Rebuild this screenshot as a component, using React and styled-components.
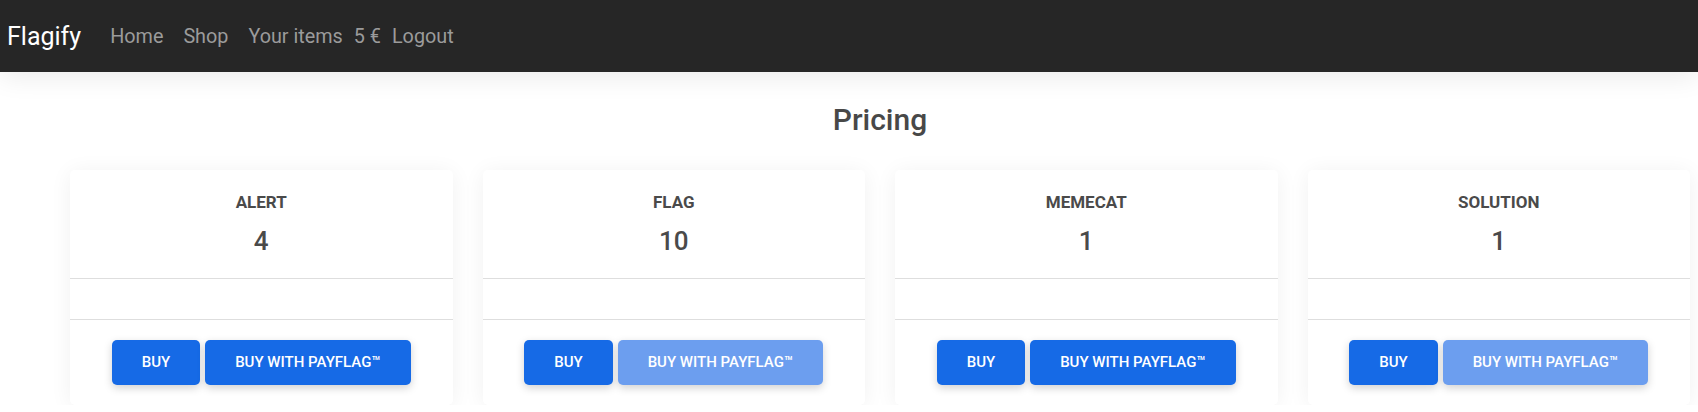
import React from "react";
import styled, { createGlobalStyle } from "styled-components";

const Global = createGlobalStyle`
  html, body { margin: 0; padding: 0; background: #ffffff; }
  body { font-family: Roboto, "Liberation Sans", Arial, sans-serif; overflow: hidden; }
`;

const Navbar = styled.nav`
  height: 72px;
  background: #262626;
  display: flex;
  align-items: center;
  padding: 0 7px;
  box-shadow: 0 4px 28px rgba(0, 0, 0, 0.09);
  position: relative;
  z-index: 1;
`;

const Brand = styled.a`
  color: #ffffff;
  font-size: 25px;
  margin-right: 19px;
  text-decoration: none;
`;

const NavLink = styled.a`
  color: #9b9b9b;
  font-size: 19.8px;
  padding: 0 10px;
  text-decoration: none;
`;

const Balance = styled.span`
  color: #9b9b9b;
  font-size: 19.8px;
  padding: 0 1px;
`;

const Main = styled.main`
  width: 1620px;
  margin-left: 70px;
  padding-top: 30px;
`;

const Title = styled.h2`
  margin: 0 0 32px;
  text-align: center;
  font-size: 30px;
  line-height: 36px;
  font-weight: 500;
  color: #484848;
`;

const Grid = styled.div`
  display: grid;
  grid-template-columns: repeat(4, 1fr);
  gap: 30px;
`;

const Card = styled.div`
  background: #ffffff;
  border-radius: 5px;
  box-shadow: 0 2px 22px rgba(0, 0, 0, 0.06);
  display: flex;
  flex-direction: column;
`;

const CardHead = styled.div`
  padding: 22px 0 21px;
  text-align: center;
  border-bottom: 1px solid #dedede;
`;

const ItemName = styled.div`
  font-size: 17px;
  line-height: 21.6px;
  font-weight: 700;
  color: #4a4a4a;
  margin-bottom: 12px;
`;

const Price = styled.div`
  font-size: 26px;
  line-height: 31px;
  font-weight: 500;
  color: #4a4a4a;
`;

const CardBody = styled.div`
  height: 40px;
  border-bottom: 1px solid #dedede;
`;

const Actions = styled.div`
  padding: 20px 0;
  display: flex;
  justify-content: center;
  gap: 5px;
`;

const Button = styled.button`
  height: 45px;
  padding: 0 30px;
  border: none;
  border-radius: 5px;
  font-family: Roboto, "Liberation Sans", Arial, sans-serif;
  font-size: 15px;
  font-weight: 500;
  color: #ffffff;
  text-transform: uppercase;
  background: ${(p) => (p.disabled ? "#6c9eef" : "#166ae6")};
  box-shadow: 0 3px 8px rgba(0, 0, 0, 0.18);
  cursor: pointer;
`;

const items = [
  { name: "ALERT", price: 4, pay: true },
  { name: "FLAG", price: 10, pay: false },
  { name: "MEMECAT", price: 1, pay: true },
  { name: "SOLUTION", price: 1, pay: false },
];

export default function App() {
  return (
    <>
      <Global />
      <Navbar>
        <Brand>Flagify</Brand>
        <NavLink>Home</NavLink>
        <NavLink>Shop</NavLink>
        <NavLink>Your items</NavLink>
        <Balance>5 €</Balance>
        <NavLink>Logout</NavLink>
      </Navbar>
      <Main>
        <Title>Pricing</Title>
        <Grid>
          {items.map((it) => (
            <Card key={it.name}>
              <CardHead>
                <ItemName>{it.name}</ItemName>
                <Price>{it.price}</Price>
              </CardHead>
              <CardBody />
              <Actions>
                <Button>Buy</Button>
                <Button disabled={!it.pay}>Buy with PayFlag™</Button>
              </Actions>
            </Card>
          ))}
        </Grid>
      </Main>
    </>
  );
}
